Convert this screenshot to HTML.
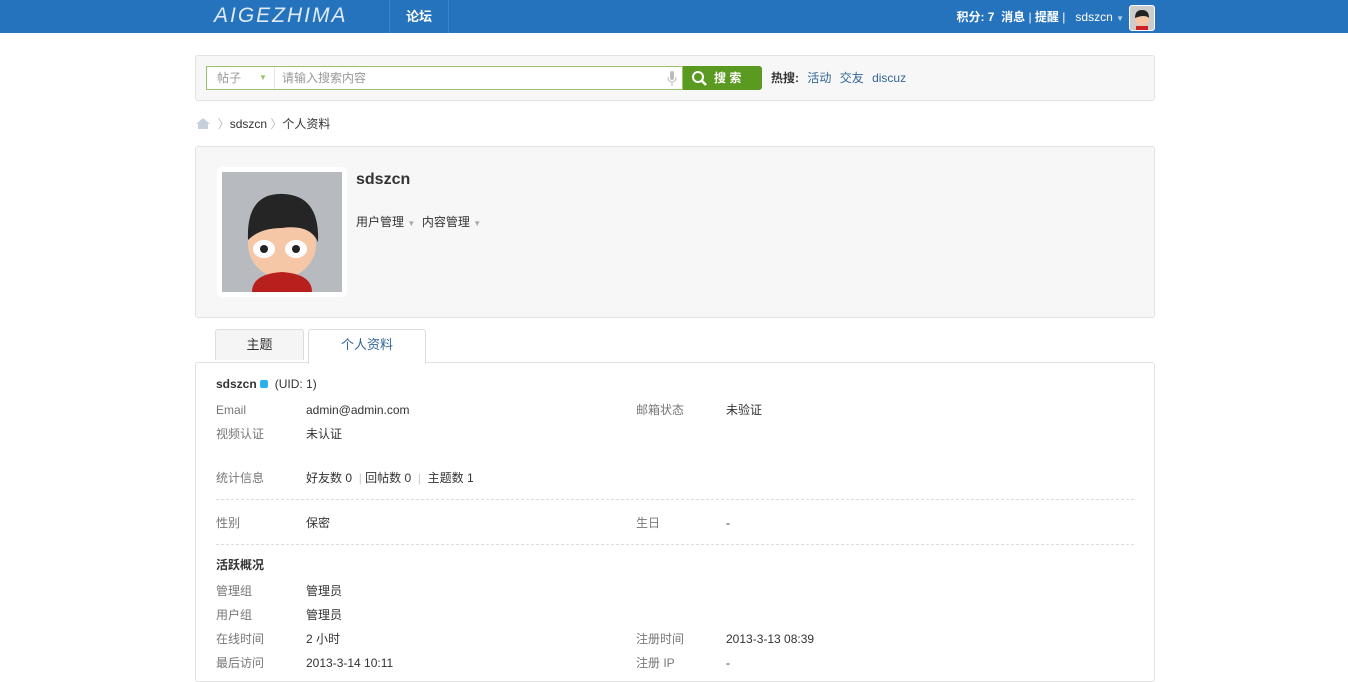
<!DOCTYPE html>
<html><head><meta charset="utf-8"><style>
*{margin:0;padding:0;box-sizing:border-box}
body{width:1348px;height:667px;overflow:hidden;background:#fff;font:12px/16px "Liberation Sans","Noto Sans CJK SC",sans-serif;color:#333}
.hd{position:absolute;left:0;top:0;width:1348px;height:33px;background:#2573bd}
.logo{position:absolute;left:214px;top:4px;color:#dfeaf6;font:italic 21px/24px "Liberation Sans",sans-serif;letter-spacing:2px}
.nav{position:absolute;left:389px;top:0;width:60px;height:33px;border-left:1px solid #3d85c9;border-right:1px solid #3d85c9;color:#fff;font-weight:bold;font-size:13px;line-height:33px;text-align:center}
.ur{position:absolute;right:224px;top:0;height:33px;line-height:35px;color:#fff;font-size:12px;font-weight:bold;white-space:nowrap}
.av{position:absolute;left:1129px;top:5px;width:26px;height:26px;background:#eee;border-radius:3px;border:1px solid #fff;overflow:hidden}
.sb{position:absolute;left:195px;top:55px;width:960px;height:46px;background:#f7f7f7;border:1px solid #e2e2e2;border-radius:3px}
.inp{position:absolute;left:10px;top:10px;width:477px;height:24px;border:1px solid #9bc16a;background:#fff;color:#999}
.btn{position:absolute;left:487px;top:10px;width:79px;height:24px;background:#5a9a20;border-radius:0 3px 3px 0;color:#fff;font-weight:bold;line-height:24px;padding-left:31px}
.hot{position:absolute;left:575px;top:14px}
.hot a{color:#336699;margin-left:5px}
.bc{position:absolute;left:195px;top:116px;color:#333}
.pf{position:absolute;left:195px;top:146px;width:960px;height:172px;background:#f7f7f7;border:1px solid #e2e2e2;border-radius:3px}
.pic{position:absolute;left:21px;top:20px;width:130px;height:130px;background:#fff;border-radius:5px}
.pic div{position:absolute;left:5px;top:5px;width:120px;height:120px;background:#b7bbbf;overflow:hidden}
.tab{position:absolute;top:329px;height:34px;border:1px solid #ddd;border-bottom:none;border-radius:3px 3px 0 0;text-align:center;font-size:13px;line-height:30px}
.ct{position:absolute;left:195px;top:362px;width:960px;height:320px;border:1px solid #e2e2e2;border-radius:3px}
.r{position:absolute;font-size:12px;line-height:16px}
.l{color:#777}
.dash{position:absolute;left:20px;width:918px;border-top:1px dashed #ddd}
</style></head><body>
<div class="hd"><div class="logo">AIGEZHIMA</div><div class="nav">论坛</div>
<div class="ur">积分: 7 &nbsp;消息 <span style="font-weight:normal">|</span> 提醒 <span style="font-weight:normal">|</span> &nbsp; <span style="font-weight:normal">sdszcn <span style="font-size:8px;color:#b6cfe8">▼</span></span></div>
<div class="av"><svg width="24" height="24"><rect width="24" height="24" fill="#ccc"/><circle cx="12" cy="13" r="7" fill="#f3c6a5"/><path d="M5 12Q5 4 12 4Q19 4 19 12Q15 8 5 12Z" fill="#222"/><rect x="6" y="20" width="12" height="4" fill="#c22"/></svg></div></div>
<div class="sb"><div class="inp"><span style="position:absolute;left:10px;top:3px">帖子</span><span style="position:absolute;left:52px;top:3px;color:#9bc16a;font-size:8px">▼</span><span style="position:absolute;left:67px;top:0;height:22px;border-left:1px solid #e5e5e5;padding-left:7px;line-height:22px">请输入搜索内容</span><svg style="position:absolute;left:460px;top:4px" width="10" height="15"><rect x="3" y="0" width="4" height="9" rx="2" fill="#bbb"/><path d="M1 6Q1 11 5 11Q9 11 9 6M5 11V15" stroke="#bbb" fill="none"/></svg></div>
<div class="btn"><svg style="position:absolute;left:8px;top:4px" width="17" height="17"><circle cx="7" cy="7" r="5" stroke="#fff" stroke-width="2" fill="none"/><line x1="11" y1="11" x2="15" y2="15" stroke="#fff" stroke-width="2.5"/></svg>搜 索</div>
<div class="hot"><b>热搜:</b> <a>活动</a> <a>交友</a> <a>discuz</a></div></div>
<div class="bc"><svg width="16" height="12" style="vertical-align:-1px"><path d="M1 7L8 1L15 7H13V12H3V7Z" fill="#c5d0dc"/></svg> <span style="color:#bbb">&nbsp;〉</span>sdszcn <span style="color:#bbb">〉</span>个人资料</div>
<div class="pf"><div class="pic"><div><svg width="120" height="120"><circle cx="60" cy="72" r="34" fill="#f6c7a6"/><path d="M26 68Q24 20 62 22Q98 24 96 70Q88 52 60 56Q38 56 26 68Z" fill="#252525"/><ellipse cx="42" cy="77" rx="11" ry="9" fill="#fff"/><ellipse cx="74" cy="77" rx="11" ry="9" fill="#fff"/><circle cx="42" cy="77" r="4" fill="#222"/><circle cx="74" cy="77" r="4" fill="#222"/><path d="M30 120Q30 102 60 100Q90 102 90 120Z" fill="#b8201e"/></svg></div></div>
<div style="position:absolute;left:160px;top:23px;font-size:16px;line-height:20px;font-weight:bold">sdszcn</div>
<div style="position:absolute;left:160px;top:67px">用户管理 <span style="color:#aaa;font-size:8px">▼</span> &nbsp;内容管理 <span style="color:#aaa;font-size:8px">▼</span></div></div>
<div class="tab" style="left:215px;width:89px;background:#f5f5f5;height:31px">主题</div>
<div class="tab" style="left:308px;width:118px;background:#fff;color:#336699;z-index:2;height:35px">个人资料</div>
<div class="ct">
<div class="r" style="left:20px;top:13px"><b>sdszcn</b> <span style="display:inline-block;width:8px;height:8px;background:#2cb0e8;border-radius:2px"></span> &nbsp;(UID: 1)</div>
<div class="r l" style="left:20px;top:39px">Email</div><div class="r" style="left:110px;top:39px">admin@admin.com</div>
<div class="r l" style="left:440px;top:39px">邮箱状态</div><div class="r" style="left:530px;top:39px">未验证</div>
<div class="r l" style="left:20px;top:63px">视频认证</div><div class="r" style="left:110px;top:63px">未认证</div>
<div class="r l" style="left:20px;top:107px">统计信息</div><div class="r" style="left:110px;top:107px">好友数 0 &nbsp;<span style="color:#ccc">|</span> 回帖数 0 &nbsp;<span style="color:#ccc">|</span>&nbsp; 主题数 1</div>
<div class="dash" style="top:136px"></div>
<div class="r l" style="left:20px;top:152px">性别</div><div class="r" style="left:110px;top:152px">保密</div>
<div class="r l" style="left:440px;top:152px">生日</div><div class="r" style="left:530px;top:152px">-</div>
<div class="dash" style="top:181px"></div>
<div class="r" style="left:20px;top:194px;font-weight:bold">活跃概况</div>
<div class="r l" style="left:20px;top:220px">管理组</div><div class="r" style="left:110px;top:220px">管理员</div>
<div class="r l" style="left:20px;top:244px">用户组</div><div class="r" style="left:110px;top:244px">管理员</div>
<div class="r l" style="left:20px;top:268px">在线时间</div><div class="r" style="left:110px;top:268px">2 小时</div>
<div class="r l" style="left:440px;top:268px">注册时间</div><div class="r" style="left:530px;top:268px">2013-3-13 08:39</div>
<div class="r l" style="left:20px;top:292px">最后访问</div><div class="r" style="left:110px;top:292px">2013-3-14 10:11</div>
<div class="r l" style="left:440px;top:292px">注册 IP</div><div class="r" style="left:530px;top:292px">-</div>
</div>
</body></html>
